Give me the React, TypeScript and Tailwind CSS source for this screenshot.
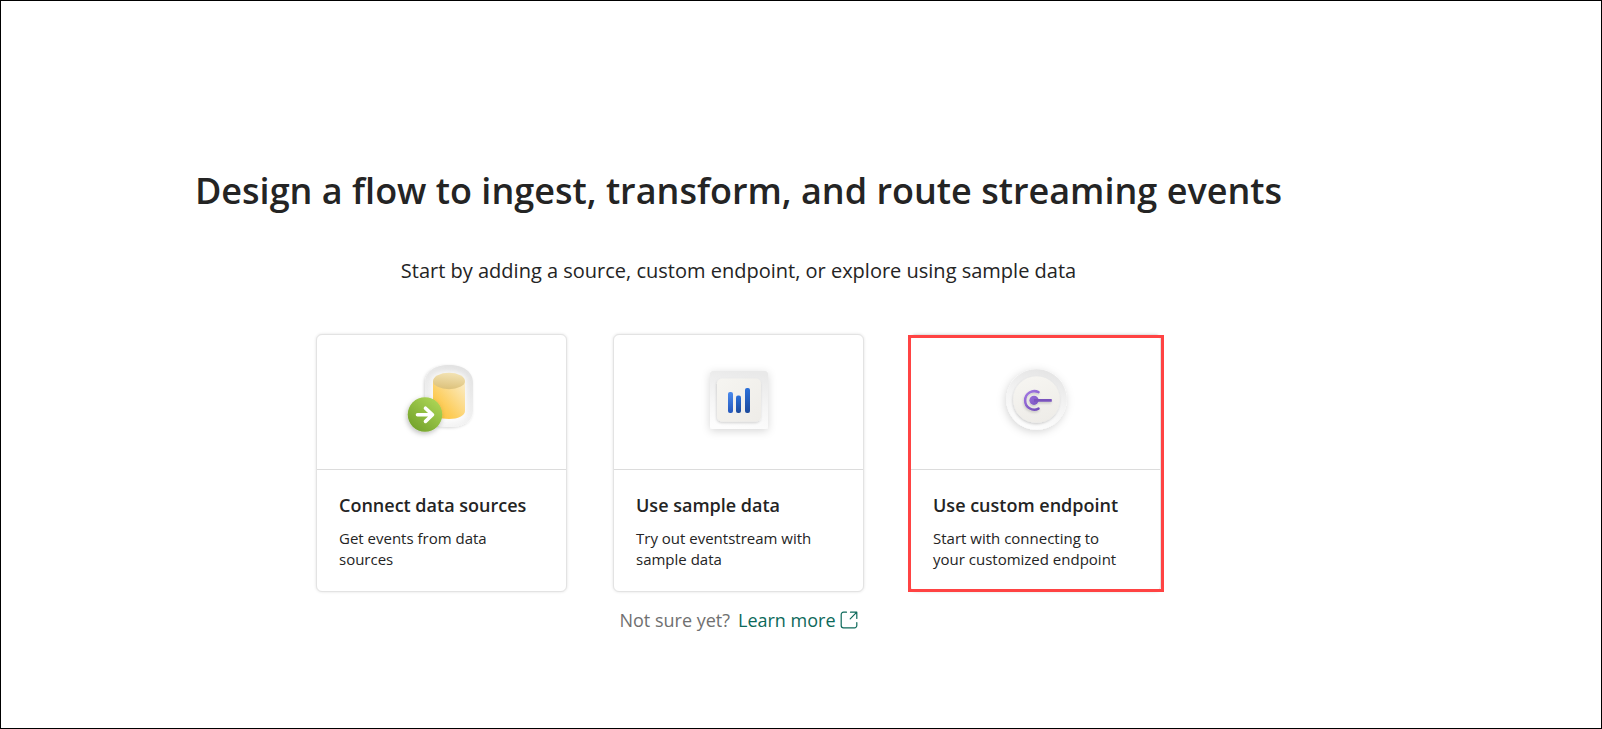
import type { ReactNode } from "react";

function DataSourceIcon() {
  return (
    <svg viewBox="1 1 100 100" className="size-[100px]" aria-hidden="true">
      <defs>
        <linearGradient id="ds-body" x1="0" y1="1" x2="1" y2="0">
          <stop offset="0" stopColor="#ffc233" />
          <stop offset="0.35" stopColor="#fdcd5a" />
          <stop offset="1" stopColor="#fbeecb" />
        </linearGradient>
        <linearGradient id="ds-top" x1="0.6" y1="0" x2="0.4" y2="1">
          <stop offset="0" stopColor="#f3e3b4" />
          <stop offset="1" stopColor="#dcc17a" />
        </linearGradient>
        <linearGradient id="ds-plate" x1="0.7" y1="0" x2="0.4" y2="1">
          <stop offset="0" stopColor="#e2e2e2" />
          <stop offset="0.5" stopColor="#ededed" />
          <stop offset="1" stopColor="#f5f5f5" />
        </linearGradient>
        <linearGradient id="ds-badge" x1="0.85" y1="0.1" x2="0.2" y2="0.9">
          <stop offset="0" stopColor="#abd455" />
          <stop offset="1" stopColor="#76a52d" />
        </linearGradient>
        <filter id="ds-shadow" x="-40%" y="-40%" width="180%" height="180%">
          <feDropShadow dx="-1" dy="2" stdDeviation="2.5" floodColor="#000" floodOpacity="0.25" />
        </filter>
        <filter id="ds-soft" x="-40%" y="-40%" width="180%" height="180%">
          <feDropShadow dx="-1" dy="1" stdDeviation="1.5" floodColor="#000" floodOpacity="0.16" />
        </filter>
        <filter id="ds-glow" x="-40%" y="-40%" width="180%" height="180%">
          <feGaussianBlur stdDeviation="2" />
        </filter>
      </defs>
      <path d="M34 32c0-11 9-18 24-18s24 7 24 18v27c0 11-9 17-24 17s-24-6-24-17z" fill="url(#ds-plate)" filter="url(#ds-soft)" />
      <path d="M40 31c0-7 6-11 18-11s18 4 18 11v30c0 7-6 11-18 11s-18-4-18-11z" fill="#fff" opacity="0.7" filter="url(#ds-glow)" />
      <path d="M42 30v30c0 4.500 7 8 16 8s16-3.500 16-8V30z" fill="url(#ds-body)" />
      <ellipse cx="58" cy="30" rx="16" ry="8.200" fill="url(#ds-top)" />
      <circle cx="34" cy="63.500" r="17.300" fill="url(#ds-badge)" filter="url(#ds-shadow)" />
      <path d="M26.500 63.800H41M34.500 57.200l7 6.600-7 6.600" fill="none" stroke="#fff" strokeWidth="3.600" strokeLinecap="round" strokeLinejoin="round" />
    </svg>
  );
}

function SampleDataIcon() {
  return (
    <svg viewBox="-1 1 100 100" className="size-[100px]" aria-hidden="true">
      <defs>
        <linearGradient id="sd-plate" x1="0.6" y1="0" x2="0.4" y2="1">
          <stop offset="0" stopColor="#e9e9e9" />
          <stop offset="0.6" stopColor="#f6f6f6" />
          <stop offset="1" stopColor="#fdfdfd" />
        </linearGradient>
        <linearGradient id="sd-tile" x1="0" y1="0" x2="1" y2="1">
          <stop offset="0" stopColor="#f6f5f1" />
          <stop offset="1" stopColor="#eeece8" />
        </linearGradient>
        <linearGradient id="sd-light" x1="0" y1="0" x2="0" y2="1">
          <stop offset="0" stopColor="#4b8aec" />
          <stop offset="1" stopColor="#2458bd" />
        </linearGradient>
        <linearGradient id="sd-dark" x1="0" y1="0" x2="0" y2="1">
          <stop offset="0" stopColor="#2b70da" />
          <stop offset="1" stopColor="#1c4a9c" />
        </linearGradient>
        <filter id="sd-shadow" x="-40%" y="-40%" width="180%" height="180%">
          <feDropShadow dx="0" dy="2" stdDeviation="4" floodColor="#000" floodOpacity="0.16" />
        </filter>
        <filter id="sd-small" x="-40%" y="-40%" width="180%" height="180%">
          <feDropShadow dx="-0.500" dy="1.500" stdDeviation="1" floodColor="#000" floodOpacity="0.16" />
        </filter>
      </defs>
      <rect x="20" y="20" width="58" height="58" rx="3" fill="url(#sd-plate)" filter="url(#sd-shadow)" />
      <rect x="27" y="27.500" width="44" height="43" rx="5" fill="url(#sd-tile)" filter="url(#sd-small)" />
      <rect x="38" y="41" width="5" height="21" rx="2" fill="url(#sd-light)" />
      <rect x="46" y="44.500" width="5" height="17.500" rx="2" fill="url(#sd-dark)" />
      <rect x="55" y="37" width="5" height="25" rx="2" fill="url(#sd-dark)" />
    </svg>
  );
}

function EndpointIcon() {
  return (
    <svg viewBox="0 1 100 100" className="size-[100px]" aria-hidden="true">
      <defs>
        <linearGradient id="ep-plate" x1="0.7" y1="0" x2="0.4" y2="1">
          <stop offset="0" stopColor="#e4e4e4" />
          <stop offset="0.5" stopColor="#f3f3f3" />
          <stop offset="1" stopColor="#fdfdfd" />
        </linearGradient>
        <linearGradient id="ep-tile" x1="0.3" y1="0" x2="0.6" y2="1">
          <stop offset="0" stopColor="#f6f5f1" />
          <stop offset="1" stopColor="#eeece8" />
        </linearGradient>
        <linearGradient id="ep-mark" gradientUnits="userSpaceOnUse" x1="38" y1="40" x2="54" y2="60">
          <stop offset="0" stopColor="#a67be6" />
          <stop offset="1" stopColor="#6f49b5" />
        </linearGradient>
        <filter id="ep-shadow" x="-40%" y="-40%" width="180%" height="180%">
          <feDropShadow dx="-1" dy="2" stdDeviation="4" floodColor="#000" floodOpacity="0.17" />
        </filter>
        <filter id="ep-small" x="-40%" y="-40%" width="180%" height="180%">
          <feDropShadow dx="-0.500" dy="1.500" stdDeviation="1.200" floodColor="#000" floodOpacity="0.18" />
        </filter>
      </defs>
      <circle cx="50.500" cy="48.500" r="30.300" fill="url(#ep-plate)" filter="url(#ep-shadow)" />
      <circle cx="50.500" cy="48.500" r="23.300" fill="url(#ep-tile)" filter="url(#ep-small)" />
      <g filter="url(#ep-small)">
        <path d="M52.500 41.200A9.200 9.200 0 1 0 52.500 57.600" fill="none" stroke="url(#ep-mark)" strokeWidth="2.500" strokeLinecap="round" />
        <circle cx="48" cy="49.300" r="4.600" fill="url(#ep-mark)" />
        <path d="M48 48h17.200q0.600 0 0.600 0.600v1.600q0 0.600-0.600 0.600H48z" fill="#7a52bd" />
      </g>
    </svg>
  );
}

function OpenIcon() {
  return (
    <svg viewBox="0 0 18 18" className="size-[18px]" fill="none" stroke="currentColor" strokeWidth="1.200" strokeLinecap="round" strokeLinejoin="round" aria-hidden="true">
      <path d="M6.500 1.200H3.500a2.300 2.300 0 0 0-2.300 2.300v11a2.300 2.300 0 0 0 2.300 2.300h11a2.300 2.300 0 0 0 2.300-2.300v-3M10.500 1.200h6.300v6.300M16.800 1.200l-6.600 6.600" />
    </svg>
  );
}

type CardProps = {
  icon: ReactNode;
  title: string;
  text: string;
  highlighted?: boolean;
};

function OptionCard({ icon, title, text, highlighted = false }: CardProps) {
  return (
    <button
      type="button"
      className="relative flex w-[251px] flex-col rounded-md border border-[#e3e3e3] bg-white text-left shadow-[0_0_3px_rgba(0,0,0,0.12)]"
    >
      <span className="flex h-[135px] w-full items-center justify-center border-b border-[#dcdcdc]">{icon}</span>
      <span className="flex flex-col gap-[10px] pt-[22px] pr-8 pb-[21px] pl-[22px]">
        <span className="text-lg leading-[26px] font-semibold whitespace-nowrap">{title}</span>
        <span className="text-[15px] leading-[21px]">{text}</span>
      </span>
      {highlighted && <span className="absolute top-0 -right-1 -bottom-px -left-[3px] border-3 border-[#ff4343]" />}
    </button>
  );
}

export default function App() {
  return (
    <main className="flex min-h-screen flex-col items-center border border-black bg-white pt-[160px] pr-[125px] font-['Open_Sans','Noto_Sans',sans-serif] text-[#242424]">
      <h1 className="text-center text-4xl leading-[60px] font-semibold">
        Design a flow to ingest, transform, and route streaming events
      </h1>
      <p className="mt-[33px] text-center text-xl leading-[34px]">
        Start by adding a source, custom endpoint, or explore using sample data
      </p>
      <div className="mt-[46px] flex gap-[46px]">
        <OptionCard icon={<DataSourceIcon />} title="Connect data sources" text="Get events from data sources" />
        <OptionCard icon={<SampleDataIcon />} title="Use sample data" text="Try out eventstream with sample data" />
        <OptionCard icon={<EndpointIcon />} title="Use custom endpoint" text="Start with connecting to your customized endpoint" highlighted />
      </div>
      <p className="mt-[15px] flex items-center gap-2 text-lg leading-[26px] text-[#707070]">
        Not sure yet?
        <a href="#learn-more" className="flex items-center gap-1 text-[#0c695a]">
          Learn more
          <OpenIcon />
        </a>
      </p>
    </main>
  );
}
